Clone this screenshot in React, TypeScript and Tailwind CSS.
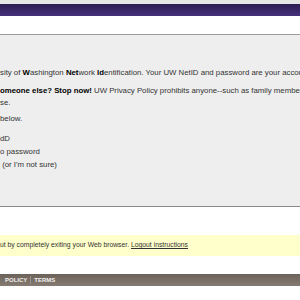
export default function App() {
  const font = { fontFamily: '"Liberation Sans", Arial, sans-serif' };
  return (
    <div className="w-[300px] h-[300px] overflow-hidden bg-white flex flex-col" style={font}>
      <div className="h-[4px] bg-[#e6e6e6] shrink-0" />
      <div className="h-[12px] bg-gradient-to-b from-[#2c1d52] to-[#46307c] shrink-0" />
      <div className="h-[18px] bg-white shrink-0" />
      <div className="h-[1px] bg-[#9c9c9c] shrink-0" />
      <div className="h-[171px] bg-[#eeeeee] shrink-0 pt-[32px] text-[7.8px] leading-[12px] text-[#333333] whitespace-nowrap overflow-hidden">
        <p>
          sity of <b className="text-black">W</b>ashington <b className="text-black">Net</b>work <b className="text-black">Id</b>entification. Your UW NetID and password are your account credentials
        </p>
        <p className="mt-[6px]">
          <b className="text-black">omeone else? Stop now!</b> UW Privacy Policy prohibits anyone--such as family members
        </p>
        <p>se.</p>
        <p className="mt-[4px]">below.</p>
        <div className="mt-[7px] leading-[13px]">
          <div>dD</div>
          <div>o password</div>
          <div>&nbsp;(or I'm not sure)</div>
        </div>
      </div>
      <div className="h-[1px] bg-[#8a8a8a] shrink-0" />
      <div className="h-[28px] bg-white shrink-0" />
      <div className="h-[21px] bg-[#ffffcc] shrink-0 flex items-center text-[6.8px] text-[#333333] whitespace-nowrap">
        <span>
          ut by completely exiting your Web browser. <span className="underline">Logout instructions</span>
        </span>
      </div>
      <div className="h-[18px] bg-white shrink-0" />
      <div className="h-[12px] bg-gradient-to-b from-[#6b625a] to-[#857b72] shrink-0 flex items-center text-[6px] font-bold text-[#f2f0ee] whitespace-nowrap">
        <span className="pl-[5px]">POLICY</span>
        <span className="mx-[3px] w-[1px] h-[8px] bg-[#9a918a]" />
        <span>TERMS</span>
      </div>
      <div className="flex-1 bg-white" />
    </div>
  );
}
